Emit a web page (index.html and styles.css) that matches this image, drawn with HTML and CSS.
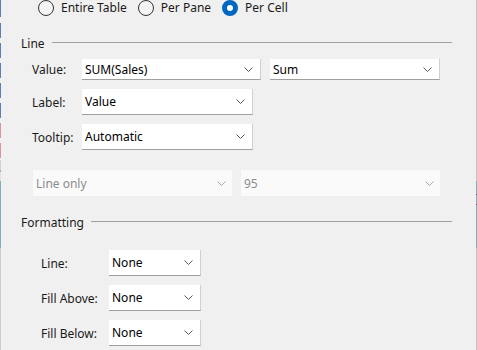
FILE: index.html
```html
<!DOCTYPE html>
<html lang="en">
<head>
  <meta charset="UTF-8">
  <title>Reference Line</title>
  <link rel="stylesheet" href="styles.css">
</head>
<body>
  <div class="frame">
    <div class="edge edge-left"></div>

    <div class="panel">
      <div class="scope">
        <label class="radio"><span class="dot"></span>Entire Table</label>
        <label class="radio"><span class="dot"></span>Per Pane</label>
        <label class="radio"><span class="dot checked"></span>Per Cell</label>
      </div>

      <div class="group-title"><span>Line</span><i class="rule"></i></div>

      <div class="row row-value">
        <span class="field-label">Value:</span>
        <div class="select value-field">SUM(Sales)
          <svg class="chev" viewBox="0 0 9 5"><polyline points="0.5,0.5 4.5,4.5 8.5,0.5"/></svg>
        </div>
        <div class="select agg-field">Sum
          <svg class="chev" viewBox="0 0 9 5"><polyline points="0.5,0.5 4.5,4.5 8.5,0.5"/></svg>
        </div>
      </div>

      <div class="row">
        <span class="field-label">Label:</span>
        <div class="select mid-field">Value
          <svg class="chev" viewBox="0 0 9 5"><polyline points="0.5,0.5 4.5,4.5 8.5,0.5"/></svg>
        </div>
      </div>

      <div class="row">
        <span class="field-label">Tooltip:</span>
        <div class="select mid-field">Automatic
          <svg class="chev" viewBox="0 0 9 5"><polyline points="0.5,0.5 4.5,4.5 8.5,0.5"/></svg>
        </div>
      </div>

      <div class="row row-disabled">
        <div class="select disabled half-field">Line only
          <svg class="chev" viewBox="0 0 9 5"><polyline points="0.5,0.5 4.5,4.5 8.5,0.5"/></svg>
        </div>
        <div class="select disabled half-field">95
          <svg class="chev" viewBox="0 0 9 5"><polyline points="0.5,0.5 4.5,4.5 8.5,0.5"/></svg>
        </div>
      </div>

      <div class="group-title formatting"><span>Formatting</span><i class="rule"></i></div>

      <div class="row row-format first">
        <span class="field-label">Line:</span>
        <div class="select small-field">None
          <svg class="chev" viewBox="0 0 9 5"><polyline points="0.5,0.5 4.5,4.5 8.5,0.5"/></svg>
        </div>
      </div>

      <div class="row row-format">
        <span class="field-label">Fill Above:</span>
        <div class="select small-field">None
          <svg class="chev" viewBox="0 0 9 5"><polyline points="0.5,0.5 4.5,4.5 8.5,0.5"/></svg>
        </div>
      </div>

      <div class="row row-format">
        <span class="field-label">Fill Below:</span>
        <div class="select small-field">None
          <svg class="chev" viewBox="0 0 9 5"><polyline points="0.5,0.5 4.5,4.5 8.5,0.5"/></svg>
        </div>
      </div>
    </div>

    <div class="edge edge-right"></div>
  </div>
</body>
</html>
```

FILE: styles.css
```css
* {
  box-sizing: border-box;
  margin: 0;
  padding: 0;
}

body {
  font-family: 'Noto Sans', 'Open Sans', sans-serif;
  font-size: 12px;
  color: #1a1a1a;
  background-color: #f0f0f0;
  height: 350px;
  overflow: hidden;
}

.frame {
  display: flex;
  height: 350px;
}

.edge {
  width: 1px;
  flex: none;
}

.edge-left {
  background: linear-gradient(to bottom,
    #5d7fb0 0 17px, #f0f0f0 17px 23px,
    #5d7fb0 23px 38px, #f0f0f0 38px 43px,
    #5d7fb0 43px 58px, #f0f0f0 58px 63px,
    #5d7fb0 63px 78px, #f0f0f0 78px 83px,
    #5d7fb0 83px 98px, #f0f0f0 98px 103px,
    #5d7fb0 103px 118px, #f0f0f0 118px 123px,
    #d9939c 123px 138px, #f0f0f0 138px 143px,
    #d9939c 143px 158px, #f0f0f0 158px 160px,
    #d0d0d0 160px 170px, #a8a8a8 170px 172px, #e0e0e0 172px 181px,
    #80b0bd 181px 248px,
    #cdcdcd 248px 350px);
}

.edge-right {
  background: linear-gradient(to bottom,
    #c4c4c4 0 181px,
    #80b0bd 181px 194px, #606060 194px 195px,
    #80b0bd 195px 204px, #606060 204px 205px,
    #80b0bd 205px 248px,
    #c4c4c4 248px 350px);
}

.panel {
  flex: 1;
  padding: 0 24px 0 20px;
}

/* scope radios */
.scope {
  display: flex;
  align-items: center;
  height: 15px;
  padding-left: 17px;
  gap: 11px;
}

.radio {
  display: flex;
  align-items: center;
  gap: 7px;
  line-height: 15px;
}

.dot {
  width: 16px;
  height: 16px;
  border: 1px solid #333;
  border-radius: 50%;
  background-color: #f4f4f4;
}

.dot.checked {
  border: 5px solid #0067c0;
  background-color: #fff;
}

/* group headers */
.group-title {
  display: flex;
  align-items: flex-start;
  gap: 7px;
  height: 16px;
  line-height: 16px;
  margin-top: 21px;
}

.group-title.formatting {
  margin-top: 19px;
}

.rule {
  flex: 1;
  margin-top: 6px;
  border-top: 1px solid #a0a0a0;
}

/* field rows */
.row {
  display: flex;
  align-items: center;
  margin-top: 9px;
  margin-left: 11px;
}

.row-value {
  margin-top: 7px;
}

.row-disabled {
  margin-top: 20px;
  margin-left: 12px;
  gap: 9px;
}

.row-format {
  margin-left: 20px;
}

.row-format.first {
  margin-top: 19px;
}

.field-label {
  width: 50px;
  flex: none;
}

.row-format .field-label {
  width: 68px;
}

.select {
  display: flex;
  align-items: center;
  justify-content: space-between;
  height: 26px;
  padding: 0 7px 0 3px;
  background-color: #fff;
  border-right: 1px solid #cfcfcf;
  border-bottom: 1px solid #a0a0a0;
  color: #000;
}

.chev {
  width: 9px;
  height: 5px;
  fill: none;
  stroke: #5a5a5a;
  stroke-width: 1;
}

.value-field {
  width: 179px;
  height: 21px;
}

.agg-field {
  width: 170px;
  height: 21px;
  margin-left: 9px;
}

.mid-field {
  width: 171px;
}

.half-field {
  width: 199px;
}

.small-field {
  width: 92px;
}

.select.disabled {
  background-color: #fafafa;
  border: none;
  color: #8c8c8c;
  padding-right: 6px;
}

.select.disabled .chev {
  stroke: #a8a8a8;
}
```
